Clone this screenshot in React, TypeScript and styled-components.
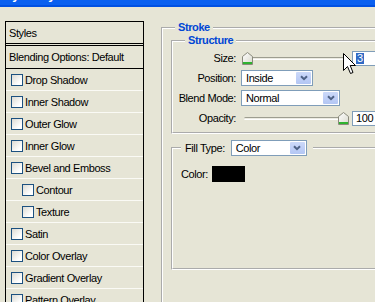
import { createGlobalStyle, styled } from "styled-components";

const COLORS = {
  face: "#E6E5D6",
  title: "#0A60F0",
  titleEdge: "#0050E2",
  legend: "#0046D5",
  field: "#7F9DB9",
  check: "#1C5180",
  highlight: "#316AC5",
  rowLine: "#FAFAF5",
};
const FONT = `"Liberation Sans", Arial, sans-serif`;

const GlobalStyle = createGlobalStyle`
  * { box-sizing: border-box; }
  html, body {
    margin: 0;
    padding: 0;
    overflow: hidden;
    background: ${COLORS.face};
  }
  body {
    font-family: ${FONT};
    font-size: 11px;
    letter-spacing: -0.4px;
    color: #000;
  }
`;

const Window = styled.div`
  position: relative;
  width: 375px;
  height: 302px;
  overflow: hidden;
  display: flex;
  flex-direction: column;
`;

const TitleBar = styled.div`
  flex: none;
  height: 7px;
  overflow: hidden;
  background: linear-gradient(${COLORS.title} 0 5px, ${COLORS.titleEdge} 5px);
`;

const Title = styled.div`
  margin: -12px 0 0 -3px;
  font: bold 13px/13px ${FONT};
  letter-spacing: 0;
  color: #fff;
  white-space: nowrap;
`;

const Content = styled.div`
  flex: 1;
  min-height: 0;
  display: flex;
  padding: 14px 0 0 5px;
`;

const StyleList = styled.ul`
  flex: none;
  width: 139px;
  margin: 0;
  padding: 0;
  list-style: none;
  border: 1px solid #000;
  border-bottom: none;
  overflow: hidden;
`;

type RowKind = "title" | "default" | "item";

const StyleRow = styled.li<{ $kind: RowKind; $indent?: boolean }>`
  display: flex;
  align-items: center;
  gap: 2px;
  white-space: nowrap;
  height: ${(p) => (p.$kind === "title" ? 24 : p.$kind === "default" ? 23 : 22)}px;
  padding-left: ${(p) => (p.$kind !== "item" ? 3 : p.$indent ? 16 : 5)}px;
  border-bottom: ${(p) =>
    p.$kind === "title"
      ? "3px double #000"
      : p.$kind === "default"
      ? "1px solid #000"
      : `1px solid ${COLORS.rowLine}`};
`;

const Check = styled.span`
  flex: none;
  width: 12px;
  height: 12px;
  border: 1px solid ${COLORS.check};
  background: linear-gradient(135deg, #dcdbd3, #ffffff 75%);
`;

const Group = styled.fieldset<{ $pad: number; $closed?: boolean }>`
  margin: 0;
  min-width: 0;
  padding: 0 0 0 ${(p) => p.$pad}px;
  border: 2px groove #fff;
  border-right: none;
  border-bottom: ${(p) => (p.$closed ? "2px groove #fff" : "none")};
`;

const StrokeGroup = styled(Group)`
  flex: 1;
  margin-left: 17px;
`;

const StructureGroup = styled(Group)`
  margin-top: -1px;
`;

const FillGroup = styled(Group)`
  margin-top: 6px;
  height: 130px;
`;

const Caption = styled.legend<{ $inset: number }>`
  margin-left: ${(p) => p.$inset}px;
  padding: 0 3px 2px;
  line-height: 12px;
  font-weight: bold;
  color: ${COLORS.legend};
`;

const FillCaption = styled.legend`
  display: flex;
  align-items: center;
  gap: 6px;
  padding: 0 6px 0 4px;
`;

const Fields = styled.div`
  display: grid;
  grid-template-columns: 63px auto;
  grid-auto-rows: 20px;
  column-gap: 5px;
  align-items: center;
  padding-bottom: 4px;
`;

const Label = styled.span`
  text-align: right;
  white-space: nowrap;
`;

const Control = styled.div`
  display: flex;
  align-items: center;
  gap: 3px;
`;

const SliderBox = styled.div`
  position: relative;
  flex: none;
  width: 108px;
  height: 13px;
  display: flex;
  align-items: center;
`;

const Track = styled.div`
  flex: 1;
  height: 3px;
  margin: 0 3px;
  border-radius: 2px;
  background: #ecebe2;
  border-top: 1px solid #9d9d90;
  border-bottom: 1px solid #fff;
`;

const Thumb = styled.svg`
  position: absolute;
  top: 0;
`;

const NumberBox = styled.div`
  flex: none;
  width: 36px;
  height: 15px;
  display: flex;
  align-items: center;
  padding-left: 3px;
  border: 1px solid ${COLORS.field};
  background: #fff;
  white-space: nowrap;
`;

const Selected = styled.span`
  padding: 0 1px;
  line-height: 11px;
  background: ${COLORS.highlight};
  color: #fff;
`;

const Select = styled.div<{ $width: number }>`
  flex: none;
  width: ${(p) => p.$width}px;
  height: 16px;
  display: flex;
  align-items: center;
  justify-content: space-between;
  padding: 1px 1px 1px 4px;
  border: 1px solid ${COLORS.field};
  background: #fff;
  color: #000;
  font-weight: normal;
  white-space: nowrap;
`;

const DropButton = styled.span`
  flex: none;
  width: 15px;
  height: 12px;
  display: flex;
  align-items: center;
  justify-content: center;
  border-radius: 1px;
  background: linear-gradient(#ccd9f9, #b3c6f4);
`;

const FillLabel = styled.span`
  color: #000;
  white-space: nowrap;
`;

const ColorRow = styled.div`
  display: flex;
  align-items: center;
  gap: 4px;
  padding-top: 10px;
`;

const Swatch = styled.span`
  width: 33px;
  height: 16px;
  background: #000;
`;

const Pointer = styled.svg`
  position: absolute;
  left: 343px;
  top: 53px;
`;

function Chevron() {
  return (
    <svg width="8" height="6" viewBox="0 0 8 6">
      <path d="M1 1.2 L4 4.2 L7 1.2" fill="none" stroke="#4d6185" strokeWidth="2" />
    </svg>
  );
}

function Dropdown({ value, width }: { value: string; width: number }) {
  return (
    <Select $width={width}>
      <span>{value}</span>
      <DropButton>
        <Chevron />
      </DropButton>
    </Select>
  );
}

function Slider({ value, max }: { value: number; max: number }) {
  const left = Math.round((value / max) * (108 - 11));
  return (
    <SliderBox>
      <Track />
      <Thumb width="11" height="13" viewBox="0 0 11 13" style={{ left }}>
        <defs>
          <linearGradient id="thumbFill" x1="0" y1="0" x2="1" y2="1">
            <stop offset="0" stopColor="#ffffff" />
            <stop offset="1" stopColor="#d8d8cc" />
          </linearGradient>
        </defs>
        <path d="M0.5 4.5 L5.5 0.5 L10.5 4.5 V12.5 H0.5 Z" fill="url(#thumbFill)" stroke="#8a8a7c" />
        <rect x="1" y="10" width="9" height="2" fill="#2fb32f" />
      </Thumb>
    </SliderBox>
  );
}

const styleItems: { name: string; indent?: boolean }[] = [
  { name: "Drop Shadow" },
  { name: "Inner Shadow" },
  { name: "Outer Glow" },
  { name: "Inner Glow" },
  { name: "Bevel and Emboss" },
  { name: "Contour", indent: true },
  { name: "Texture", indent: true },
  { name: "Satin" },
  { name: "Color Overlay" },
  { name: "Gradient Overlay" },
  { name: "Pattern Overlay" },
];

export default function App() {
  return (
    <Window>
      <GlobalStyle />
      <TitleBar>
        <Title>Layer Style</Title>
      </TitleBar>
      <Content>
        <StyleList>
          <StyleRow $kind="title">Styles</StyleRow>
          <StyleRow $kind="default">Blending Options: Default</StyleRow>
          {styleItems.map((item) => (
            <StyleRow key={item.name} $kind="item" $indent={item.indent}>
              <Check />
              {item.name}
            </StyleRow>
          ))}
        </StyleList>

        <StrokeGroup $pad={8}>
          <Caption $inset={4}>Stroke</Caption>
          <StructureGroup $pad={0} $closed>
            <Caption $inset={12}>Structure</Caption>
            <Fields>
              <Label>Size:</Label>
              <Control>
                <Slider value={3} max={250} />
                <NumberBox>
                  <Selected>3</Selected>
                </NumberBox>
              </Control>
              <Label>Position:</Label>
              <Control>
                <Dropdown value="Inside" width={72} />
              </Control>
              <Label>Blend Mode:</Label>
              <Control>
                <Dropdown value="Normal" width={99} />
              </Control>
              <Label>Opacity:</Label>
              <Control>
                <Slider value={100} max={100} />
                <NumberBox>100</NumberBox>
              </Control>
            </Fields>
          </StructureGroup>

          <FillGroup $pad={8} $closed>
            <FillCaption>
              <FillLabel>Fill Type:</FillLabel>
              <Dropdown value="Color" width={76} />
            </FillCaption>
            <ColorRow>
              <span>Color:</span>
              <Swatch />
            </ColorRow>
          </FillGroup>
        </StrokeGroup>
      </Content>
      <Pointer width="14" height="22" viewBox="0 0 14 22">
        <path
          d="M0.5 0.5 V17.5 L4.5 13.5 L7.5 20.5 L10 19.5 L7.2 12.5 H12.5 Z"
          fill="#fff"
          stroke="#000"
        />
      </Pointer>
    </Window>
  );
}
